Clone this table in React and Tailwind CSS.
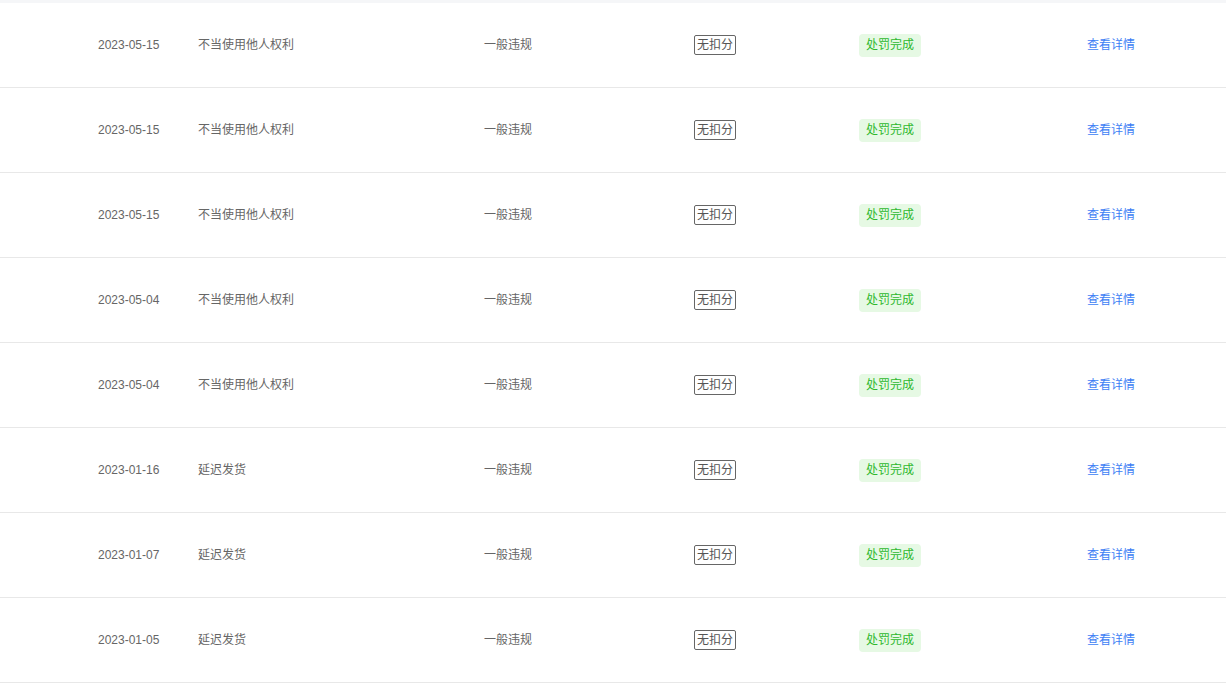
const rows = [
  ["2023-05-15", "不当使用他人权利"],
  ["2023-05-15", "不当使用他人权利"],
  ["2023-05-15", "不当使用他人权利"],
  ["2023-05-04", "不当使用他人权利"],
  ["2023-05-04", "不当使用他人权利"],
  ["2023-01-16", "延迟发货"],
  ["2023-01-07", "延迟发货"],
  ["2023-01-05", "延迟发货"],
];

export default function App() {
  return (
    <div
      className="w-[1226px] h-[683px] bg-white overflow-hidden text-[12px]"
      style={{ fontFamily: '"Liberation Sans", "Noto Sans CJK SC", sans-serif' }}
    >
      <div className="h-[3px] bg-[#f5f6f8]" />
      {rows.map(([d, r], i) => (
        <div
          key={i}
          className="h-[85px] border-b border-[#e8e8e8] flex items-center pl-[98px] text-[#666]"
        >
          <div className="w-[100px]">{d}</div>
          <div className="w-[286px]">{r}</div>
          <div className="w-[210px]">一般违规</div>
          <div className="w-[165px]">
            <span className="inline-block border border-[#666] rounded-[2px] px-[2px] h-[20px] leading-[18px] text-[#555]">
              无扣分
            </span>
          </div>
          <div className="w-[228px]">
            <span className="inline-block bg-[#e6f9e4] text-[#2eb82e] rounded-[4px] px-[7px] h-[23px] leading-[23px]">
              处罚完成
            </span>
          </div>
          <div className="text-[#3d7ef5]">查看详情</div>
        </div>
      ))}
    </div>
  );
}
